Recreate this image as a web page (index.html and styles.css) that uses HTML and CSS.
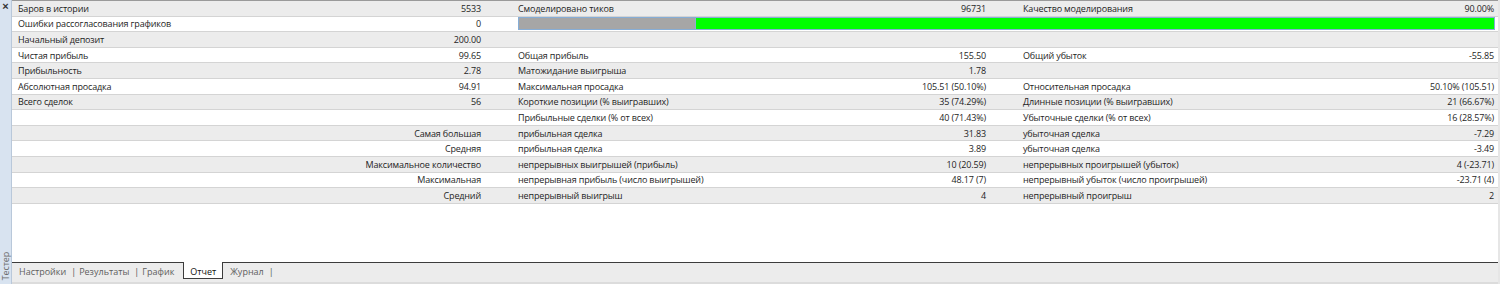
FILE: index.html
```html
<!DOCTYPE html>
<html lang="ru">
<head>
<meta charset="utf-8">
<title>Тестер — Отчет</title>
<link rel="stylesheet" href="styles.css">
</head>
<body>
<div class="app">
  <aside class="side">
    <span class="close">×</span>
    <span class="side-title">Тестер</span>
  </aside>
  <main class="main">
    <div class="report">
      <div class="row grey">
        <span class="lab first">Баров в истории</span><span class="val">5533</span>
        <span class="lab">Смоделировано тиков</span><span class="val">96731</span>
        <span class="lab">Качество моделирования</span><span class="val last">90.00%</span>
      </div>
      <div class="row">
        <span class="lab first">Ошибки рассогласования графиков</span><span class="val">0</span>
        <div class="bar-cell"><div class="bar"><div class="bar-grey"></div><div class="bar-green"></div></div></div>
      </div>
      <div class="row grey">
        <span class="lab first">Начальный депозит</span><span class="val">200.00</span>
        <span class="lab"></span><span class="val"></span><span class="lab"></span><span class="val last"></span>
      </div>
      <div class="row">
        <span class="lab first">Чистая прибыль</span><span class="val">99.65</span>
        <span class="lab">Общая прибыль</span><span class="val">155.50</span>
        <span class="lab">Общий убыток</span><span class="val last">-55.85</span>
      </div>
      <div class="row grey">
        <span class="lab first">Прибыльность</span><span class="val">2.78</span>
        <span class="lab">Матожидание выигрыша</span><span class="val">1.78</span>
        <span class="lab"></span><span class="val last"></span>
      </div>
      <div class="row">
        <span class="lab first">Абсолютная просадка</span><span class="val">94.91</span>
        <span class="lab">Максимальная просадка</span><span class="val">105.51 (50.10%)</span>
        <span class="lab">Относительная просадка</span><span class="val last">50.10% (105.51)</span>
      </div>
      <div class="row grey">
        <span class="lab first">Всего сделок</span><span class="val">56</span>
        <span class="lab">Короткие позиции (% выигравших)</span><span class="val">35 (74.29%)</span>
        <span class="lab">Длинные позиции (% выигравших)</span><span class="val last">21 (66.67%)</span>
      </div>
      <div class="row">
        <span class="lab first"></span><span class="val"></span>
        <span class="lab">Прибыльные сделки (% от всех)</span><span class="val">40 (71.43%)</span>
        <span class="lab">Убыточные сделки (% от всех)</span><span class="val last">16 (28.57%)</span>
      </div>
      <div class="row grey">
        <span class="span2">Самая большая</span>
        <span class="lab">прибыльная сделка</span><span class="val">31.83</span>
        <span class="lab">убыточная сделка</span><span class="val last">-7.29</span>
      </div>
      <div class="row">
        <span class="span2">Средняя</span>
        <span class="lab">прибыльная сделка</span><span class="val">3.89</span>
        <span class="lab">убыточная сделка</span><span class="val last">-3.49</span>
      </div>
      <div class="row grey">
        <span class="span2">Максимальное количество</span>
        <span class="lab">непрерывных выигрышей (прибыль)</span><span class="val">10 (20.59)</span>
        <span class="lab">непрерывных проигрышей (убыток)</span><span class="val last">4 (-23.71)</span>
      </div>
      <div class="row">
        <span class="span2">Максимальная</span>
        <span class="lab">непрерывная прибыль (число выигрышей)</span><span class="val">48.17 (7)</span>
        <span class="lab">непрерывный убыток (число проигрышей)</span><span class="val last">-23.71 (4)</span>
      </div>
      <div class="row grey">
        <span class="span2">Средний</span>
        <span class="lab">непрерывный выигрыш</span><span class="val">4</span>
        <span class="lab">непрерывный проигрыш</span><span class="val last">2</span>
      </div>
    </div>
    <div class="blank"></div>
    <nav class="tabs">
      <span class="tab">Настройки</span><span class="sep">|</span>
      <span class="tab">Результаты</span><span class="sep">|</span>
      <span class="tab">График</span>
      <span class="tab active">Отчет</span>
      <span class="tab">Журнал</span><span class="sep">|</span>
    </nav>
  </main>
</div>
</body>
</html>
```

FILE: styles.css
```css
html, body {
  margin: 0;
  padding: 0;
  width: 1500px;
  height: 284px;
  overflow: hidden;
  background: #ffffff;
}

body {
  font-family: "Open Sans", "Liberation Sans", sans-serif;
  font-size: 9px;
  letter-spacing: -0.15px;
  color: #1e1e1e;
}

.app {
  display: flex;
  height: 284px;
}

.side {
  width: 12px;
  flex: none;
  background: #d8e3f0;
  border-right: 1px solid #b9c8da;
  display: flex;
  flex-direction: column;
  justify-content: space-between;
  align-items: center;
  padding: 1px 0 4px;
  box-sizing: border-box;
}

.close {
  font-family: "Liberation Sans", sans-serif;
  font-size: 11px;
  font-weight: bold;
  line-height: 10px;
  color: #333;
}

.side-title {
  writing-mode: vertical-rl;
  transform: rotate(180deg);
  font-size: 9px;
  color: #6a6a6a;
}

.main {
  flex: 1;
  display: flex;
  flex-direction: column;
  min-width: 0;
  border-right: 2px solid #e6e6e6;
}

.report {
  border-top: 1px solid #9a9a9a;
}

.row {
  display: grid;
  grid-template-columns: 237px 238px 252px 253px 252px 1fr;
  height: 15.6px;
  box-sizing: border-box;
  border-bottom: 1px solid #d4d4d4;
  align-items: center;
  background: #ffffff;
  white-space: nowrap;
}

.row.grey {
  background: #ececec;
}

.lab {
  padding-left: 31px;
  overflow: hidden;
}

.lab.first {
  padding-left: 6px;
}

.val {
  text-align: right;
  padding-right: 6px;
}

.val.last {
  padding-right: 4px;
}

.span2 {
  grid-column: span 2;
  text-align: right;
  padding-right: 6px;
}

.bar-cell {
  grid-column: span 4;
  padding-left: 31px;
  padding-right: 3px;
  height: 100%;
  display: flex;
  align-items: center;
}

.bar {
  flex: 1;
  height: 13px;
  box-sizing: border-box;
  border: 1px solid #86add6;
  display: flex;
}

.bar-grey {
  width: 176px;
  background: #a6a6a6;
  border-right: 1px solid #8fb0d2;
}

.bar-green {
  flex: 1;
  background: #00ff00;
}

.blank {
  flex: 1;
  background: #ffffff;
}

.tabs {
  height: 19px;
  flex: none;
  border-top: 1px solid #3c3c3c;
  border-bottom: 2px solid #dcdcdc;
  background: #ececec;
  display: flex;
  align-items: flex-start;
  padding-left: 4px;
  box-sizing: content-box;
  color: #5e5e5e;
  font-size: 9px;
  letter-spacing: 0;
}

.tab {
  padding: 2px 3px 0;
  height: 15px;
  box-sizing: border-box;
}

.sep {
  padding: 2px 0 0 2px;
  color: #555;
}

.tab.active {
  background: #ffffff;
  color: #111;
  border: 1px solid #3c3c3c;
  border-top: none;
  margin-top: -1px;
  height: 17px;
  padding: 3px 6px 0;
  margin-left: 6px;
  margin-right: 4px;
}
```
